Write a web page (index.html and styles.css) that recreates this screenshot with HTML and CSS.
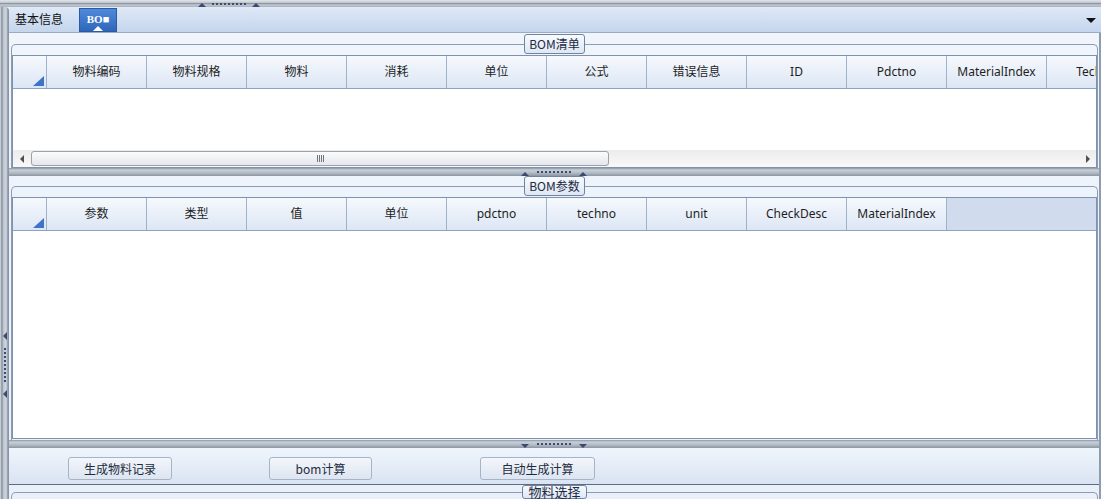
FILE: index.html
```html
<!DOCTYPE html>
<html lang="zh-CN">
<head>
  <meta charset="UTF-8" />
  <title>BOM</title>
  <link rel="stylesheet" href="styles.css">
</head>
<body>
  <div class="hsplit top-split">
    <div class="grip up"><i class="arrow"></i><i class="dots"></i><i class="arrow"></i></div>
  </div>

  <div class="frame">
    <div class="vsplit">
      <div class="vgrip"><i class="arrow"></i><i class="dots"></i><i class="arrow"></i></div>
    </div>

    <div class="main">
      <div class="tabbar">
        <span class="tab">基本信息</span>
        <span class="tab active">BO■<i class="tab-pointer"></i></span>
        <span class="tab-menu"></span>
      </div>

      <div class="content">
        <!-- BOM list -->
        <fieldset class="group">
          <legend>BOM清单</legend>
          <div class="grid">
            <div class="grid-head">
              <div class="corner"><i></i></div>
              <div class="col">物料编码</div>
              <div class="col">物料规格</div>
              <div class="col">物料</div>
              <div class="col">消耗</div>
              <div class="col">单位</div>
              <div class="col">公式</div>
              <div class="col">错误信息</div>
              <div class="col">ID</div>
              <div class="col">Pdctno</div>
              <div class="col">MaterialIndex</div>
              <div class="col">Techno</div>
            </div>
            <div class="grid-body short"></div>
            <div class="hscroll">
              <span class="sbtn left"><i></i></span>
              <span class="thumb"><i></i></span>
              <span class="track"></span>
              <span class="sbtn right"><i></i></span>
            </div>
          </div>
        </fieldset>

        <div class="hsplit">
          <div class="grip up"><i class="arrow"></i><i class="dots"></i><i class="arrow"></i></div>
        </div>

        <!-- BOM params -->
        <fieldset class="group">
          <legend>BOM参数</legend>
          <div class="grid">
            <div class="grid-head">
              <div class="corner"><i></i></div>
              <div class="col">参数</div>
              <div class="col">类型</div>
              <div class="col">值</div>
              <div class="col">单位</div>
              <div class="col">pdctno</div>
              <div class="col">techno</div>
              <div class="col">unit</div>
              <div class="col">CheckDesc</div>
              <div class="col">MaterialIndex</div>
              <div class="col-fill"></div>
            </div>
            <div class="grid-body tall"></div>
          </div>
        </fieldset>

        <div class="hsplit">
          <div class="grip down"><i class="arrow"></i><i class="dots"></i><i class="arrow"></i></div>
        </div>

        <div class="actions">
          <button class="btn btn-record">生成物料记录</button>
          <button class="btn btn-calc">bom计算</button>
          <button class="btn btn-auto">自动生成计算</button>
        </div>

        <fieldset class="group last">
          <legend>物料选择</legend>
        </fieldset>
      </div>
    </div>
  </div>
</body>
</html>
```

FILE: styles.css
```css
* {
  box-sizing: border-box;
}

body {
  margin: 0;
  width: 1101px;
  height: 499px;
  overflow: hidden;
  background-color: #eef4fc;
  font-family: "Noto Sans", "Noto Sans CJK SC", sans-serif;
  font-size: 12px;
  color: #1e1e1e;
}

/* splitters */
.hsplit {
  height: 8px;
  background: linear-gradient(#8b96a4 0, #c9cfd7 25%, #b3bbc5 60%, #8a95a3 100%);
  display: flex;
  justify-content: center;
}

.top-split {
  height: 7px;
  justify-content: flex-start;
  padding-left: 198px;
  background: linear-gradient(#e3e6ea 0, #c5cbd3 35%, #8d97a3 50%, #c3c9d1 70%, #a9b1bb 100%);
}

.grip {
  display: flex;
  align-items: center;
  gap: 4px;
}

.grip .arrow {
  width: 0;
  height: 0;
  border-left: 4px solid transparent;
  border-right: 4px solid transparent;
}

.grip.up .arrow {
  border-bottom: 4px solid #3b4a70;
  align-self: flex-end;
}

.grip.down .arrow {
  border-top: 4px solid #3b4a70;
  align-self: flex-end;
}

.grip .dots {
  width: 34px;
  height: 2px;
  margin: 0 4px;
  background: repeating-linear-gradient(to right, #3b4a70 0 2px, transparent 2px 4px);
}

.top-split .grip {
  gap: 2px;
}

.top-split .grip .dots {
  align-self: flex-start;
  margin: 3px 4px 0;
}

.frame {
  display: flex;
  height: 492px;
}

.vsplit {
  width: 9px;
  flex-shrink: 0;
  background: linear-gradient(to right, #dfe3e8 0, #7d8898 2px, #b8c0ca 3px, #d2d8e0 6px, #8994a4 8px);
  border-top-right-radius: 4px;
}

.vgrip {
  display: flex;
  flex-direction: column;
  align-items: center;
  gap: 8px;
  padding-top: 325px;
  padding-left: 1px;
}

.vgrip .arrow {
  width: 0;
  height: 0;
  border-top: 4px solid transparent;
  border-bottom: 4px solid transparent;
  border-right: 4px solid #3b4a70;
}

.vgrip .dots {
  width: 2px;
  height: 34px;
  background: repeating-linear-gradient(#3b4a70 0 2px, transparent 2px 4px);
}

/* tabs */
.main {
  flex: 1;
  min-width: 0;
  display: flex;
  flex-direction: column;
}

.tabbar {
  height: 26px;
  display: flex;
  background: linear-gradient(#dfe9f7, #c4d5ed);
  border-bottom: 1px solid #9aabc3;
}

.tab {
  margin-left: 6px;
  line-height: 24px;
  font-family: "Noto Sans CJK SC", sans-serif;
  font-size: 12px;
  color: #111;
}

.tab.active {
  position: relative;
  margin-left: 16px;
  margin-top: 1px;
  width: 38px;
  height: 24px;
  line-height: 20px;
  text-align: center;
  background: linear-gradient(#4f8ada, #2f66ba);
  border: 1px solid #2b5aa2;
  color: #fff;
  font-family: "Liberation Serif", serif;
  font-weight: bold;
  font-size: 11px;
}

.tab-pointer {
  position: absolute;
  left: 13px;
  bottom: 0;
  width: 0;
  height: 0;
  border-left: 5px solid transparent;
  border-right: 5px solid transparent;
  border-bottom: 5px solid #fff;
}

.tab-menu {
  margin-left: auto;
  margin-right: 5px;
  margin-top: 11px;
  width: 0;
  height: 0;
  border-left: 5px solid transparent;
  border-right: 5px solid transparent;
  border-top: 5px solid #111;
}

/* group boxes */
.content {
  flex: 1;
  min-width: 0;
  display: flex;
  flex-direction: column;
  border-right: 2px solid #8e9cb0;
  background: linear-gradient(#f0f5fc, #e9f0fa);
}

.group {
  margin: 1px 1px 0 2px;
  padding: 0 0 1px;
  min-width: 0;
  border: 1px solid #8b9cb4;
  border-bottom: none;
  border-radius: 5px 5px 0 0;
}

.group:first-child {
  padding-bottom: 0;
}

.group + .hsplit + .group {
  margin-top: 0;
}

.group legend {
  margin: 0 auto;
  padding: 0 4px;
  height: 20px;
  line-height: 18px;
  border: 1px solid #6f84a3;
  border-radius: 3px;
  background: linear-gradient(#f8fafd, #dfe7f2);
  font-family: "Noto Sans CJK SC", sans-serif;
  font-size: 12px;
  color: #1b2a45;
}

.group.last {
  margin-top: 0;
}

.group.last legend {
  height: 14px;
  line-height: 12px;
  font-size: 13px;
  padding: 0 5px;
}

/* grids */
.grid {
  margin-top: 1px;
  border: 1px solid #7e92ae;
  background: #fff;
  overflow: hidden;
}

.grid-head {
  display: flex;
  height: 33px;
  border-bottom: 1px solid #8ea3c1;
  background: linear-gradient(#f6f9fd, #dce6f4);
}

.corner {
  width: 34px;
  flex-shrink: 0;
  display: flex;
  align-items: flex-end;
  justify-content: flex-end;
  padding: 0 2px 2px 0;
  border-right: 1px solid #9fb2cc;
}

.corner i {
  width: 0;
  height: 0;
  border-left: 11px solid transparent;
  border-bottom: 10px solid #3d74c8;
}

.col {
  width: 100px;
  flex-shrink: 0;
  line-height: 32px;
  text-align: center;
  white-space: nowrap;
  border-right: 1px solid #9fb2cc;
}

.col-fill {
  flex: 1;
  background: #d0dcee;
}

.grid-body.short {
  height: 61px;
}

.grid-body.tall {
  height: 207px;
}

.hscroll {
  height: 17px;
  display: flex;
  align-items: center;
  background: linear-gradient(#ececec, #f8f8f8);
}

.sbtn {
  width: 17px;
  height: 17px;
  flex-shrink: 0;
  display: flex;
  align-items: center;
  justify-content: center;
}

.sbtn i {
  width: 0;
  height: 0;
  border-top: 4px solid transparent;
  border-bottom: 4px solid transparent;
}

.sbtn.left i {
  border-right: 4px solid #505050;
}

.sbtn.right i {
  border-left: 4px solid #505050;
}

.thumb {
  margin-left: 1px;
  width: 578px;
  flex-shrink: 0;
  height: 15px;
  display: flex;
  align-items: center;
  justify-content: center;
  border: 1px solid #99a2ae;
  border-radius: 3px;
  background: linear-gradient(#fbfbfb, #e4e7eb);
}

.thumb i {
  width: 7px;
  height: 7px;
  background: repeating-linear-gradient(to right, #6b7480 0 1px, transparent 1px 2px);
}

.track {
  flex: 1;
}

/* buttons */
.actions {
  height: 37px;
  display: flex;
  align-items: flex-start;
  padding-top: 9px;
  border-bottom: 1px solid #5c6c82;
  background: linear-gradient(#eff5fc, #d9e4f2);
}

.btn {
  height: 23px;
  padding: 0;
  border: 1px solid #a6b4c8;
  border-radius: 3px;
  background: linear-gradient(#f3f6fb, #dde5f1);
  font-family: "Noto Sans CJK SC", sans-serif;
  font-size: 12px;
  color: #1d2b3c;
}

.btn-record {
  margin-left: 59px;
  width: 104px;
}

.btn-calc {
  margin-left: 97px;
  width: 103px;
}

.btn-auto {
  margin-left: 108px;
  width: 115px;
}
```
